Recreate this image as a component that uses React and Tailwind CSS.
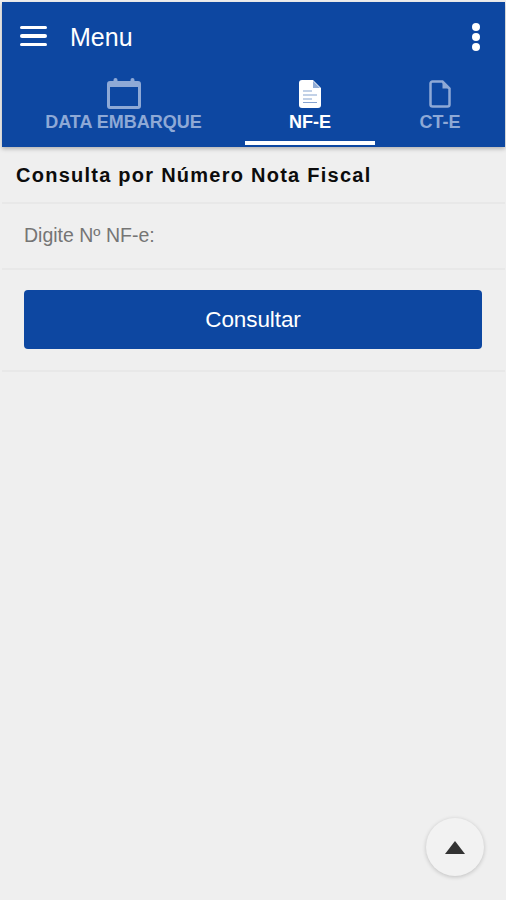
import React from 'react';

const CalendarIcon = () => (
  <svg className="mb-[2px]" width="34" height="32" viewBox="0 0 34 32" fill="none">
    <path d="M3 5.500h28a1.500 1.500 0 0 1 1.500 1.500V29a1.500 1.500 0 0 1-1.500 1.500H3A1.500 1.500 0 0 1 1.500 29V7A1.500 1.500 0 0 1 3 5.500z" stroke="currentColor" strokeWidth="3" />
    <rect x="1.500" y="5" width="31" height="5" fill="currentColor" />
    <rect x="6.500" y="1" width="4" height="7" rx="2" fill="currentColor" />
    <rect x="23.500" y="1" width="4" height="7" rx="2" fill="currentColor" />
  </svg>
);

const FileFilledIcon = () => (
  <svg className="mb-[3px]" width="22" height="28" viewBox="0 0 22 28" fill="none">
    <path d="M3 0h11l8 8v17a3 3 0 0 1-3 3H3a3 3 0 0 1-3-3V3a3 3 0 0 1 3-3z" fill="currentColor" />
    <path d="M14 1v7h7" fill="#0d47a1" opacity="0.45" />
    <path d="M4 11h9M4 15h14M4 19h9M4 22.500h14" stroke="#0d47a1" strokeWidth="1.200" opacity="0.5" />
  </svg>
);

const FileOutlineIcon = () => (
  <svg className="mb-[3px]" width="22" height="28" viewBox="0 0 22 28" fill="none">
    <path d="M3.500 1.500h10l7 7v16a2 2 0 0 1-2 2h-15a2 2 0 0 1-2-2v-21a2 2 0 0 1 2-2z" stroke="currentColor" strokeWidth="2.500" />
    <path d="M13.500 1.500v7h7" fill="currentColor" />
  </svg>
);

function Tab({ icon, label, active, className }) {
  return (
    <div className={`flex flex-col items-center justify-end h-[70px] border-b-[4px] ${active ? 'text-white border-white' : 'text-[#8ea9d6] border-transparent'} ${className}`}>
      {icon}
      <span className="text-[18px] leading-[22px] mb-[8px] font-bold">{label}</span>
    </div>
  );
}

export default function App() {
  return (
    <div className="relative h-[900px] w-[506px] overflow-hidden bg-[#efefef] pt-[2px] pl-[2px] pr-[1px] font-['Liberation_Sans',Arial,sans-serif]">
      {/* header */}
      <div className="bg-[#0d47a1] h-[145px] shadow-[0_2px_4px_rgba(0,0,0,0.25)] flex flex-col">
        <div className="flex items-center h-[70px] pl-[18px] pr-[25px]">
          <div className="flex flex-col gap-[5px] w-[27px] -mt-[2px]">
            <div className="h-[3.500px] bg-white rounded-sm" />
            <div className="h-[3.500px] bg-white rounded-sm" />
            <div className="h-[3.500px] bg-white rounded-sm" />
          </div>
          <span className="ml-[23px] text-white text-[25px] leading-none">Menu</span>
          <div className="ml-auto flex flex-col gap-[2px] -mt-[1px]">
            <div className="w-[8px] h-[8px] rounded-full bg-white" />
            <div className="w-[8px] h-[8px] rounded-full bg-white" />
            <div className="w-[8px] h-[8px] rounded-full bg-white" />
          </div>
        </div>
        <div className="flex mt-[3px]">
          <Tab icon={<CalendarIcon />} label="DATA EMBARQUE" className="w-[243px]" />
          <Tab icon={<FileFilledIcon />} label="NF-E" active className="w-[130px]" />
          <Tab icon={<FileOutlineIcon />} label="CT-E" className="w-[130px]" />
        </div>
      </div>

      {/* form */}
      <h1 className="text-[#0c0c0c] font-bold text-[20px] leading-[22px] tracking-[1.250px] pl-[14px] mt-[17px] mb-[16px]">
        Consulta por Número Nota Fiscal
      </h1>
      <div className="border-y-2 border-[#e8e8e8] h-[68px] flex items-center pl-[22px]">
        <span className="text-[#757575] text-[19.500px]">Digite Nº NF-e:</span>
      </div>
      <div className="border-b-2 border-[#e8e8e8] pt-[20px] pb-[21px] px-[22px]">
        <button className="w-[458px] h-[59px] bg-[#0d47a1] rounded-[4px] text-white text-[22.500px] tracking-[-0.1px] leading-[55px]">
          Consultar
        </button>
      </div>

      {/* scroll to top */}
      <button className="absolute left-[426px] top-[818px] w-[58px] h-[58px] rounded-full bg-[#f2f2f2] shadow-[0_1px_4px_rgba(0,0,0,0.2)] flex items-center justify-center">
        <svg width="20" height="13" viewBox="0 0 20 13">
          <path d="M10 0L20 13H0z" fill="#333" />
        </svg>
      </button>
    </div>
  );
}
